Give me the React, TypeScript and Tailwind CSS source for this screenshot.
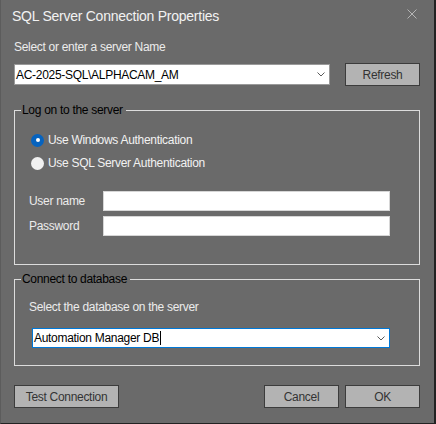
import React from "react";

const font = { fontFamily: '"Liberation Sans", Arial, sans-serif' };

function Chevron() {
  return (
    <svg width="8" height="5" viewBox="0 0 8 5" className="shrink-0">
      <polyline points="0.5,0.5 4,4 7.5,0.5" fill="none" stroke="#5a5a5a" strokeWidth="1" />
    </svg>
  );
}

function Button({ children, w }: { children: React.ReactNode; w: string }) {
  return (
    <div
      className={`${w} h-[23px] bg-[#b3b3b3] border border-[#3c3c3c] flex items-center justify-center text-[12px] leading-[16px] tracking-[-0.3px] text-[#333333]`}
    >
      {children}
    </div>
  );
}

export default function App() {
  return (
    <div
      style={font}
      className="w-[436px] h-[424px] box-border bg-[#6a6a6a] border-l border-l-[#5c5c5c] border-r-2 border-r-[#222222] border-b border-b-[#222222] flex flex-col"
    >
      {/* Title bar */}
      <div className="flex items-start justify-between pt-[6px] pl-[11px] pr-[17px]">
        <div className="text-[14px] leading-[20px] tracking-[-0.25px] text-[#f2f2f2]">
          SQL Server Connection Properties
        </div>
        <svg width="10" height="10" viewBox="0 0 10 10" className="mt-[3px]">
          <line x1="0.5" y1="0.5" x2="9.5" y2="9.5" stroke="#b5b5b5" strokeWidth="1" />
          <line x1="9.5" y1="0.5" x2="0.5" y2="9.5" stroke="#b5b5b5" strokeWidth="1" />
        </svg>
      </div>

      <div className="flex flex-col pl-[13px] pr-[14px]">
        <div className="mt-[13px] text-[12px] leading-[16px] tracking-[-0.3px] text-[#ececec]">
          Select or enter a server Name
        </div>

        <div className="mt-[8px] flex items-center h-[23px]">
          <div className="w-[316px] h-[21px] bg-white border border-[#9a9a9a] flex items-center justify-between pl-[1px] pr-[4px]">
            <span className="text-[12px] leading-[16px] tracking-[-0.3px] text-black">
              AC-2025-SQL\ALPHACAM_AM
            </span>
            <Chevron />
          </div>
          <div className="ml-[15px]">
            <Button w="w-[75px]">Refresh</Button>
          </div>
        </div>

        {/* Group 1 */}
        <fieldset className="mt-[17px] border border-[#dcdcdc] p-0">
          <legend className="ml-[6px] pl-[1px] pr-[3px] text-[12px] leading-[15px] tracking-[-0.3px] text-black">
            Log on to the server
          </legend>
          <div className="pt-[13px] pl-[14px] pr-[29px] pb-[28px] flex flex-col">
            <div className="ml-[2px] h-[18px] flex items-center">
              <div className="w-[13px] h-[13px] rounded-full bg-[#0663bf] flex items-center justify-center">
                <div className="w-[4px] h-[4px] rounded-full bg-white" />
              </div>
              <span className="ml-[4px] text-[12px] leading-[16px] tracking-[-0.3px] text-[#f2f2f2]">
                Use Windows Authentication
              </span>
            </div>
            <div className="mt-[5px] ml-[2px] h-[18px] flex items-center">
              <div className="w-[13px] h-[13px] rounded-full bg-[#f0f0f0]" />
              <span className="ml-[4px] text-[12px] leading-[16px] tracking-[-0.3px] text-[#f2f2f2]">
                Use SQL Server Authentication
              </span>
            </div>

            <div className="mt-[19px] flex items-center h-[20px]">
              <span className="w-[74px] text-[12px] leading-[16px] tracking-[-0.3px] text-[#ececec]">
                User name
              </span>
              <div className="flex-1 h-[20px] bg-white border border-[#d6d6d6]" />
            </div>
            <div className="mt-[5px] flex items-center h-[20px]">
              <span className="w-[74px] text-[12px] leading-[16px] tracking-[-0.3px] text-[#ececec]">
                Password
              </span>
              <div className="flex-1 h-[20px] bg-white border border-[#d6d6d6]" />
            </div>
          </div>
        </fieldset>

        {/* Group 2 */}
        <fieldset className="mt-[7px] border border-[#dcdcdc] p-0">
          <legend className="ml-[6px] pl-[1px] pr-[3px] text-[12px] leading-[15px] tracking-[-0.3px] text-black">
            Connect to database
          </legend>
          <div className="pt-[12px] pl-[14px] pr-[29px] pb-[17px] flex flex-col">
            <div className="text-[12px] leading-[16px] tracking-[-0.3px] text-[#ececec]">
              Select the database on the server
            </div>
            <div className="mt-[13px] ml-[3px] h-[20px] bg-white border border-[#0078d7] flex items-center justify-between pl-[1px] pr-[4px]">
              <span className="flex items-center text-[12px] leading-[16px] tracking-[-0.3px] text-black">
                Automation Manager DB
                <span className="inline-block w-[1px] h-[14px] bg-black ml-[1px]" />
              </span>
              <Chevron />
            </div>
          </div>
        </fieldset>

        {/* Buttons */}
        <div className="mt-[19px] flex items-center justify-between">
          <Button w="w-[105px]">Test Connection</Button>
          <div className="flex gap-[6px]">
            <Button w="w-[75px]">Cancel</Button>
            <Button w="w-[75px]">OK</Button>
          </div>
        </div>
      </div>
    </div>
  );
}
